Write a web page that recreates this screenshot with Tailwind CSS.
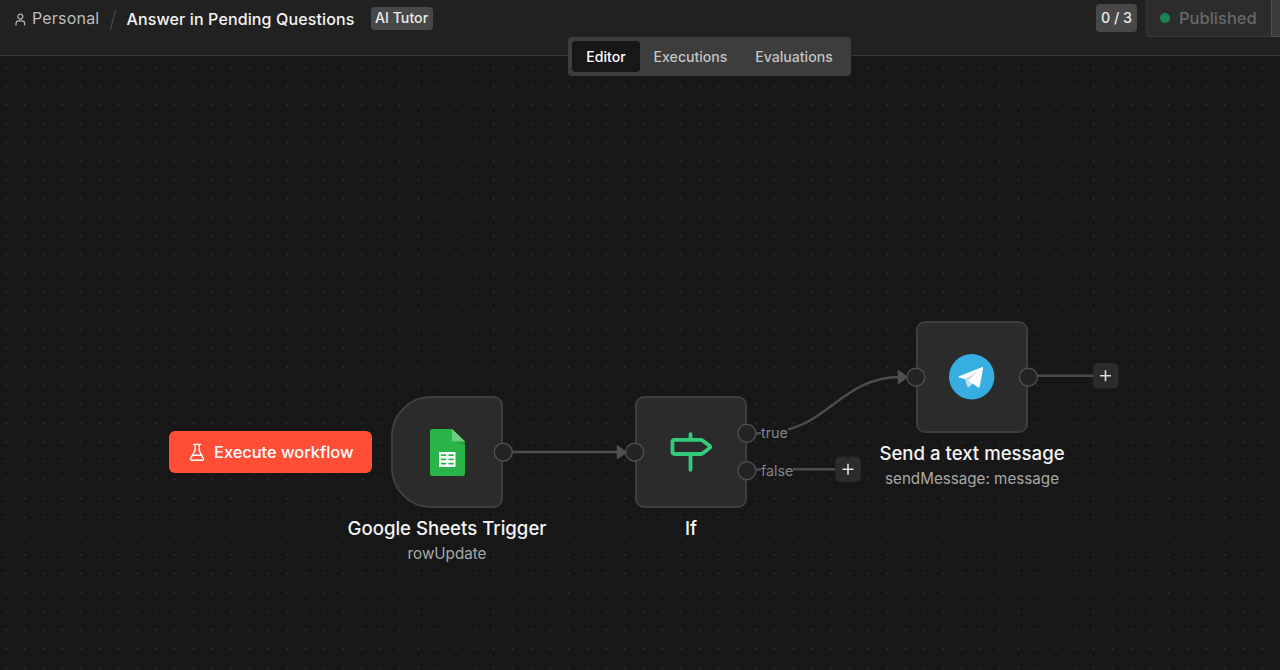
<!DOCTYPE html>
<html lang="en">
<head>
    <meta charset="UTF-8">
    <meta name="viewport" content="width=device-width, initial-scale=1.0">
    <title>Answer in Pending Questions</title>
    <script src="https://cdn.jsdelivr.net/npm/@tailwindcss/browser@4"></script>
</head>
<body class="flex h-screen flex-col overflow-hidden bg-[#171717] font-['Inter',sans-serif] text-white">

    <!-- Header -->
    <header class="relative z-10 flex h-14 shrink-0 items-start justify-between border-b border-[#383838] bg-[#212121]">
        <div class="flex h-9 items-center whitespace-nowrap pl-[14px]">
            <svg class="mt-[3px] mr-[5px] h-[13px] w-[13px] text-[#b8b8b8]" viewBox="0 0 13 13" fill="none" stroke="currentColor" stroke-width="1.2" stroke-linecap="round">
                <circle cx="6.3" cy="3.6" r="2.5"/>
                <path d="M2 12v-1.4a2.9 2.9 0 0 1 2.9-2.7h2.9a2.9 2.9 0 0 1 2.9 2.7V12"/>
            </svg>
            <span class="text-[16px] tracking-[0.2px] text-[#bdbdbd]">Personal</span>
            <svg class="mt-1 ml-[10px] h-5 w-[8px] text-[#484848]" viewBox="0 0 8 20" stroke="currentColor" stroke-width="1.3">
                <path d="M1.5 19.5 6.5 .5"/>
            </svg>
            <h1 class="ml-[9px] pt-[2px] text-[16px] font-medium tracking-[0.13px] text-[#f3f3f3]">Answer in Pending Questions</h1>
            <span class="ml-4 flex h-[23px] w-[62px] items-center justify-center rounded-[4px] bg-[#484848] text-[14.2px] font-medium text-[#eaeaea]">AI Tutor</span>
        </div>
        <div class="flex items-start whitespace-nowrap">
            <span class="mt-1 flex h-7 w-[41px] items-center justify-center rounded-[4px] bg-[#484848] text-[14.3px] font-medium text-[#eaeaea]">0 / 3</span>
            <div class="ml-[9px] flex h-[37px] w-[125px] items-center rounded-bl-[4px] border-b border-l border-[#383838] bg-[#2c2c2c] pl-[13px] text-[#696969]">
                <i class="mr-[9px] h-[10px] w-[10px] rounded-full bg-[#1c8450]"></i>
                <span class="text-[16.5px] font-medium">Published</span>
            </div>
            <div class="h-[37px] w-[9px] border-b border-l border-[#505050] bg-[#3c3c3c]"></div>
        </div>

        <!-- View tabs, hanging over the header border -->
        <nav class="absolute top-[37px] left-[568px] flex h-[39px] w-[283px] items-center rounded-[4px] bg-[#3d3d3d] px-1 text-[14.1px] font-medium text-[#c4c4c4]">
            <a class="flex h-[31px] w-[68px] items-center justify-center rounded-[4px] bg-[#171717] text-white">Editor</a>
            <a class="flex w-[101px] justify-center">Executions</a>
            <a class="flex w-[106px] justify-center">Evaluations</a>
        </nav>
    </header>

    <!-- Workflow canvas -->
    <main class="relative grow">
        <svg class="absolute inset-0" width="1280" height="614" viewBox="0 56 1280 614" fill="none">
            <defs>
                <pattern id="dots" x="-3.4" y="57.8" width="18.75" height="18.75" patternUnits="userSpaceOnUse">
                    <circle cx="9.4" cy="9.4" r=".85" fill="#363636"/>
                </pattern>
            </defs>
            <rect y="56" width="1280" height="614" fill="url(#dots)"/>
            <!-- edges -->
            <g stroke="#4c4c4c" stroke-width="2.4">
                <path d="M512 452H620"/>
                <path d="M756 433.3h5M788 429.3C830 419 848 377 900 377"/>
                <path d="M756 469.5h5M793 469.3h43"/>
                <path d="M1037 375.7h56"/>
            </g>
            <g fill="#505050" stroke="#505050" stroke-width="1.5" stroke-linejoin="round">
                <path d="M617.5 446v12.5l8.5-6.2z"/>
                <path d="M898.5 370.8v12.5l8.5-6.2z"/>
            </g>
        </svg>

        <span class="absolute top-[367px] left-[761px] text-[14.3px] leading-[19px] text-[#858585]">true</span>
        <span class="absolute top-[405px] left-[761px] text-[14.3px] leading-[19px] text-[#858585]">false</span>

        <button class="absolute top-[375px] left-[169px] flex h-[42px] w-[203px] items-center whitespace-nowrap rounded-[6px] bg-[#ff4d36] pl-5 text-[16.4px] font-medium text-white">
            <svg class="mr-[9px] h-[19px] w-4" viewBox="0 0 16 19" fill="none" stroke="currentColor" stroke-width="1.4" stroke-linecap="round" stroke-linejoin="round">
                <path d="M4.6 1.400h7M6 1.400v6.200L1.700 15.300A1.400 1.400 0 0 0 2.900 17.300h10.200a1.400 1.400 0 0 0 1.200-2L10.200 7.600V1.400M3.700 12.300h8.600"/>
            </svg>
            Execute workflow
        </button>

        <!-- Google Sheets Trigger -->
        <section class="absolute top-[340px] left-[391px] flex w-[112px] flex-col items-center whitespace-nowrap">
            <div class="flex h-28 w-28 items-center justify-center rounded-l-[40px] rounded-r-[9px] border-2 border-[#3e3e3e] bg-[#2b2b2b]">
                <svg width="35" height="47" viewBox="0 0 35 47">
                    <path d="M2.500 0H22l13 12.500V44.500a2.500 2.500 0 0 1-2.500 2.500h-30A2.500 2.500 0 0 1 0 44.500v-42A2.500 2.500 0 0 1 2.500 0z" fill="#28b446"/>
                    <path d="M24 12.500h11V16z" fill="#219b3b"/>
                    <path d="M22 0l13 12.500H23.500A1.500 1.500 0 0 1 22 11z" fill="#6ace7c"/>
                    <path d="M9 23h16.500v15H9z" fill="#fff"/>
                    <path d="M11 25.300h5.200v1.800H11zM18.500 25.300h5.200v1.800h-5.200zM11 29.400h5.200v1.900H11zM18.500 29.400h5.200v1.900h-5.200zM11 33.700h5.200v1.900H11zM18.500 33.700h5.200v1.900h-5.200z" fill="#28b446"/>
                </svg>
            </div>
            <h2 class="mt-[7px] text-[18.6px] leading-[26px] font-medium text-[#f3f3f3]">Google Sheets Trigger</h2>
            <p class="mt-[3px] text-[15.2px] leading-[20px] text-[#a8a8a8]">rowUpdate</p>
        </section>

        <!-- If -->
        <section class="absolute top-[340px] left-[635px] flex w-[112px] flex-col items-center whitespace-nowrap">
            <div class="flex h-28 w-28 items-center justify-center rounded-[9px] border-2 border-[#3e3e3e] bg-[#2b2b2b]">
                <svg width="42" height="40" viewBox="0 0 42 40" fill="none" stroke="#33cc7a" stroke-width="3.800" stroke-linecap="round" stroke-linejoin="round">
                    <path d="M20.500 2.200v5M20.500 23v14.800M4.500 7.800h26.200q1 0 1.800.6l6.800 5.200q1.700 1.300 0 2.600l-6.800 5.200q-.8.6-1.800.6H4.500q-2 0-2-2V9.800q0-2 2-2z"/>
                </svg>
            </div>
            <h2 class="mt-[7px] text-[18.6px] leading-[26px] font-medium text-[#f3f3f3]">If</h2>
        </section>

        <!-- Send a text message -->
        <section class="absolute top-[265px] left-[916px] flex w-[112px] flex-col items-center whitespace-nowrap">
            <div class="flex h-28 w-28 items-center justify-center rounded-[9px] border-2 border-[#3e3e3e] bg-[#2b2b2b]">
                <svg width="46" height="46" viewBox="0 0 46 46">
                    <circle cx="22.700" cy="22.700" r="22.700" fill="#37aee2"/>
                    <path d="M15.800 24.500l2.500 8q.6 1.400 2 .4l4-4z" fill="#c8daea"/>
                    <path d="M10 22.200L32.800 13.200q1.500-.4 1.300 1.200L30.700 32.600q-.4 1.500-1.900.7l-6-4.400-3.300-2.200-3.700-1.600-5.800-1.700q-1.300-.6 0-1.200z" fill="#fff"/>
                    <path d="M19 27L28.500 17.800 15.900 25z" fill="#c8daea"/>
                </svg>
            </div>
            <h2 class="mt-[7px] text-[18.6px] leading-[26px] font-medium text-[#f3f3f3]">Send a text message</h2>
            <p class="mt-[3px] text-[15.2px] leading-[20px] text-[#a8a8a8]">sendMessage: message</p>
        </section>

        <!-- Connection handles and add buttons -->
        <svg class="absolute inset-0" width="1280" height="614" viewBox="0 56 1280 614" fill="#2b2b2b">
            <g fill="#232323" stroke="#4e4e4e" stroke-width="1.400">
                <circle cx="503.300" cy="452.200" r="9"/>
                <circle cx="634.600" cy="452.200" r="9"/>
                <circle cx="746.900" cy="433.300" r="9"/>
                <circle cx="746.900" cy="470.700" r="9"/>
                <circle cx="915.900" cy="377.200" r="9"/>
                <circle cx="1028.400" cy="377.200" r="9"/>
            </g>
            <rect x="835.300" y="456.500" width="25.500" height="25.500" rx="5"/>
            <rect x="1093" y="363" width="25.500" height="25.500" rx="5"/>
            <path d="M842.500 469.300h11M848 463.800v11M1100 375.700h11M1105.500 370.200v11" stroke="#dedede" stroke-width="1.600"/>
        </svg>
    </main>

</body>
</html>
